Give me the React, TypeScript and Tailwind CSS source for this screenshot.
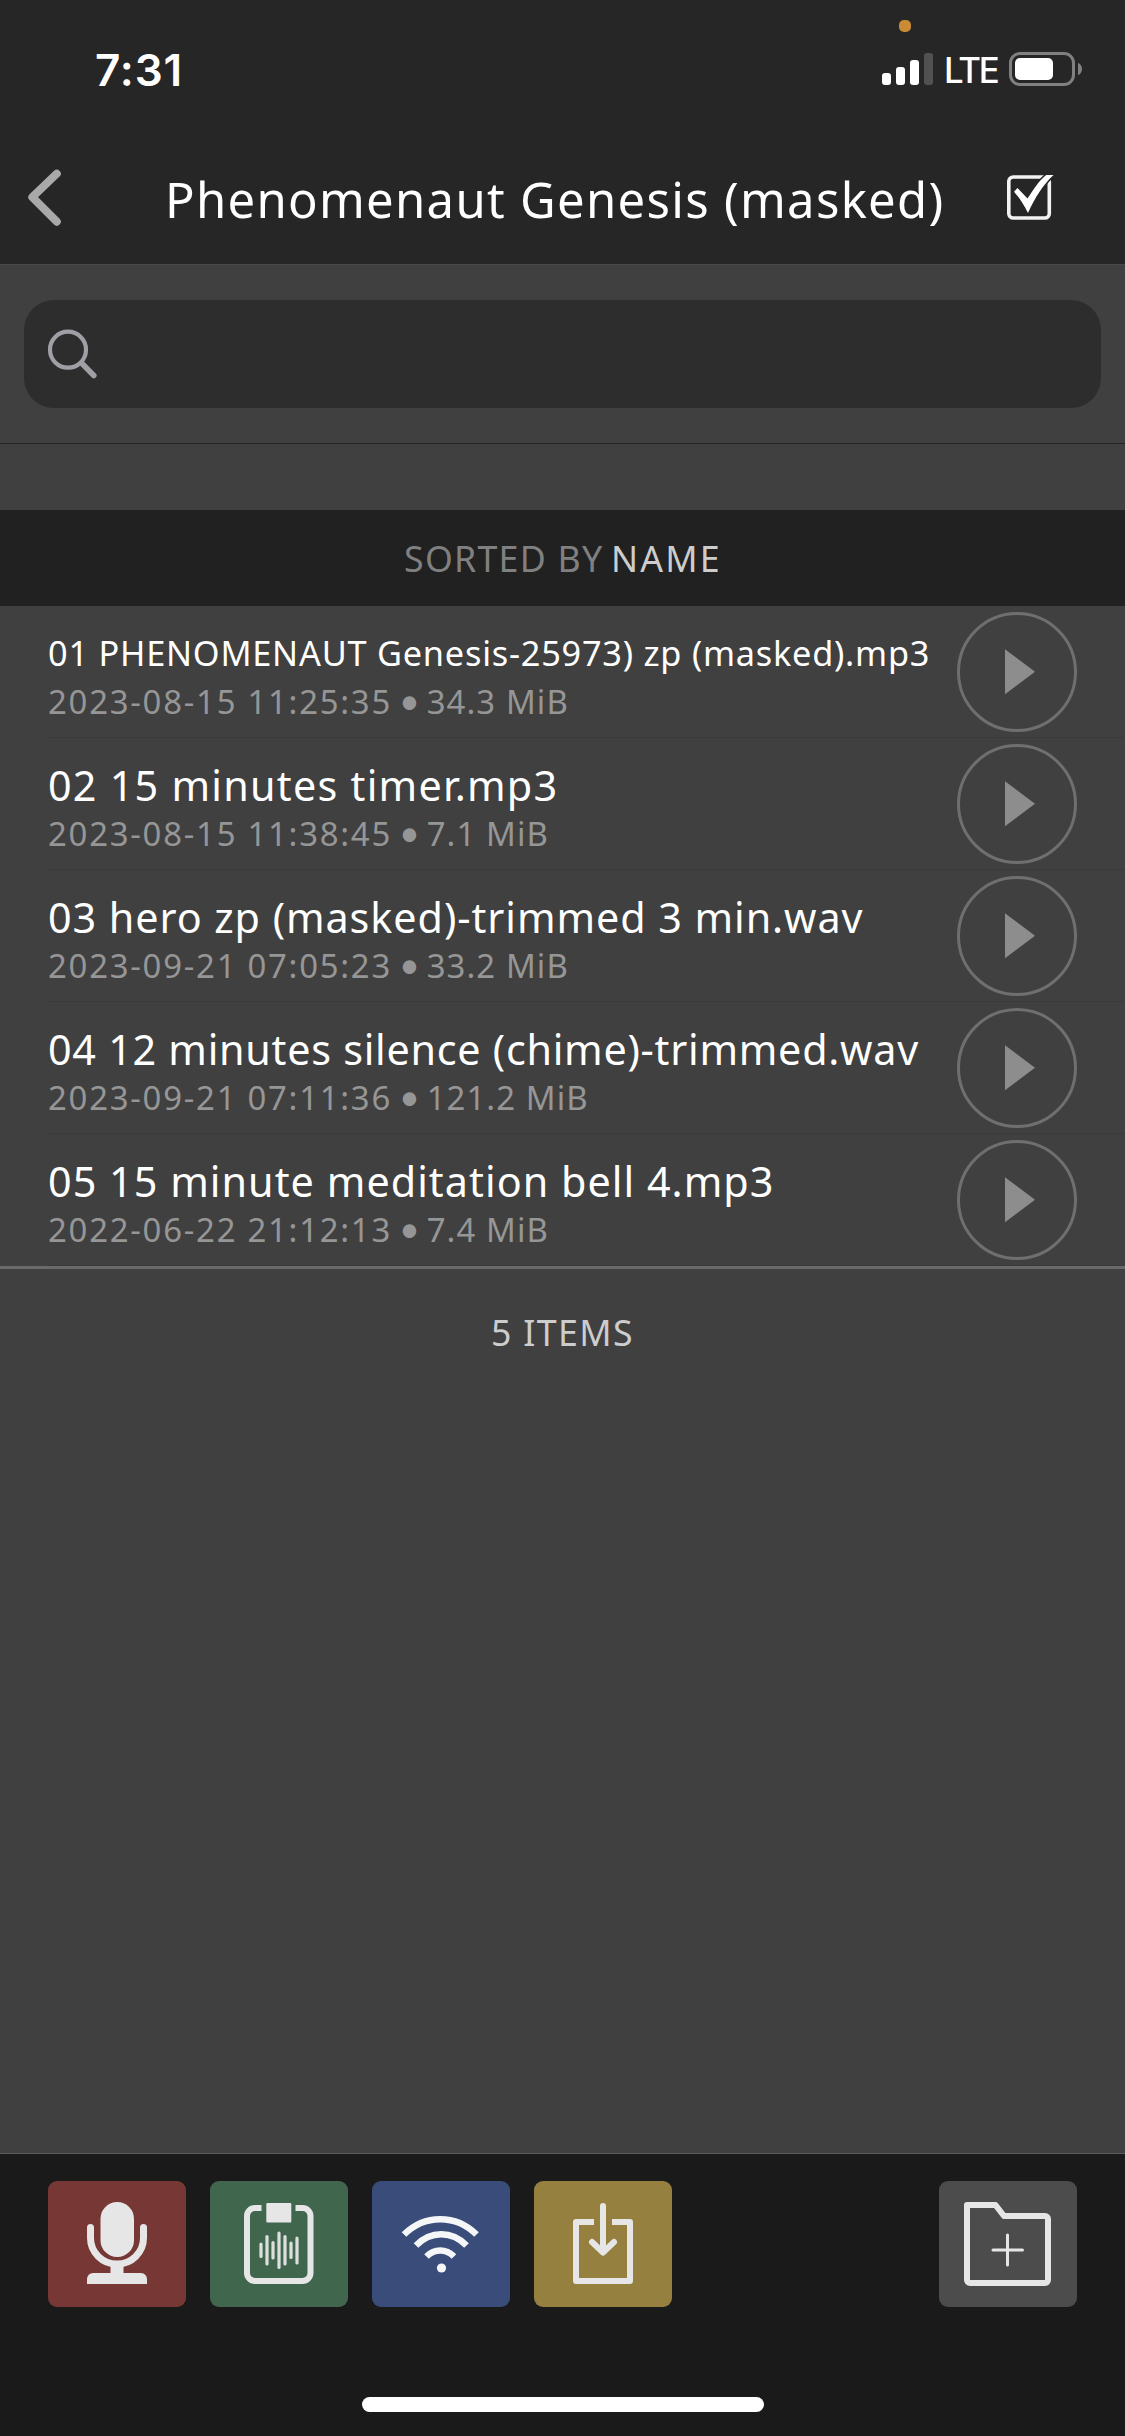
import type { ReactNode } from "react";
import { clsx } from "clsx";

type Track = {
  name: string;
  date: string;
  size: string;
  nameClass: string;
};

const tracks: Track[] = [
  {
    name: "01 PHENOMENAUT Genesis-25973) zp (masked).mp3",
    date: "2023-08-15 11:25:35",
    size: "34.3 MiB",
    nameClass: "text-[34.3px] tracking-[0.77px]",
  },
  {
    name: "02 15 minutes timer.mp3",
    date: "2023-08-15 11:38:45",
    size: "7.1 MiB",
    nameClass: "text-[41.3px] tracking-[1.25px]",
  },
  {
    name: "03 hero zp (masked)-trimmed 3 min.wav",
    date: "2023-09-21 07:05:23",
    size: "33.2 MiB",
    nameClass: "text-[41.3px] tracking-[0.94px]",
  },
  {
    name: "04 12 minutes silence (chime)-trimmed.wav",
    date: "2023-09-21 07:11:36",
    size: "121.2 MiB",
    nameClass: "text-[41.3px] tracking-[0.73px]",
  },
  {
    name: "05 15 minute meditation bell 4.mp3",
    date: "2022-06-22 21:12:13",
    size: "7.4 MiB",
    nameClass: "text-[41.3px] tracking-[1.04px]",
  },
];

function StatusBar() {
  return (
    <div className="relative flex h-[132px] items-center justify-between pt-[6px] pr-[43px] pl-[95px] font-['Inter',sans-serif] text-white">
      <span className="pt-[2px] text-[44px] leading-none font-semibold tracking-[0.9px]">7:31</span>
      <span className="absolute top-[20px] left-[899px] size-3 rounded-[5px] bg-[#c98b33]" />
      <div className="flex items-center">
        <div className="flex h-8 items-end gap-[5px]">
          <span className="h-3 w-[9px] rounded-[3px] bg-white" />
          <span className="h-[18px] w-[9px] rounded-[3px] bg-white" />
          <span className="h-[25px] w-[9px] rounded-[3px] bg-white" />
          <span className="h-8 w-[9px] rounded-[3px] bg-[#515151]" />
        </div>
        <span className="ml-[11px] w-[65px] pt-[3px] text-[34.8px] leading-none font-medium tracking-[-2.2px]">LTE</span>
        <div className="flex h-[34px] w-[66px] items-center rounded-[11px] border-3 border-[#808080] p-[3px]">
          <span className="h-[22px] w-[38px] rounded-[5px] bg-white" />
        </div>
        <svg className="ml-[3px] h-3 w-1" viewBox="0 0 4 12">
          <path d="M0 0c2.500.8 4 3 4 6s-1.500 5.200-4 6z" fill="#808080" />
        </svg>
      </div>
    </div>
  );
}

function NavBar() {
  return (
    <div className="flex h-[132px] items-center">
      <svg className="ml-6 h-[64px] w-[44px]" viewBox="0 0 44 64" fill="none">
        <path d="M32.800 7.700 8.300 31.200 32.800 55.700" stroke="#a9a9a9" strokeWidth="8" strokeLinecap="round" strokeLinejoin="round" />
      </svg>
      <h1 className="ml-[97px] w-[842px] pt-[2px] text-[49px] leading-none whitespace-nowrap text-white tracking-[1.3px]">
        Phenomenaut Genesis (masked)
      </h1>
      <svg className="size-12" viewBox="0 0 48 48">
        <rect x="1.800" y="3" width="40.500" height="41" rx="4.500" fill="none" stroke="#f2f2f2" strokeWidth="3.600" />
        <path
          d="M7 17.700 10.500 14 20.500 24.500C27 15 32 6.500 39.200 1H46.500C36 11 28 23.500 21 39 17 31 12.500 24 7 17.700z"
          fill="#fff"
          stroke="#262626"
          strokeWidth="3"
          paintOrder="stroke"
        />
      </svg>
    </div>
  );
}

function SearchField() {
  return (
    <div className="h-[180px] border-t border-b border-t-[#484848] border-b-[#242424] px-6 pt-[35px]">
      <div className="flex h-[108px] items-center rounded-[30px] bg-[#2d2d2d] pl-[22px]">
        <svg className="size-[54px]" viewBox="0 0 54 54" fill="none" stroke="#a09fa6" strokeLinecap="round">
          <circle cx="22" cy="22.700" r="18" strokeWidth="4.200" />
          <path d="M35.500 36 47.800 48.500" strokeWidth="5.500" />
        </svg>
      </div>
    </div>
  );
}

function TrackRow({ track }: { track: Track }) {
  return (
    <li className="ml-12 flex h-[132px] justify-between border-b border-[#3a3a3a] pr-12">
      <div className="pt-[23px] whitespace-nowrap">
        <p className={clsx("leading-[48px] text-white", track.nameClass)}>{track.name}</p>
        <p className="mt-[4px] h-[42px] text-[32.9px] leading-[42px] tracking-[1.75px] text-[#969696]">
          {track.date}{" "}
          <span className="inline-flex w-[14px] justify-center font-['Lato',sans-serif] text-[36px] leading-none tracking-normal">•</span>{" "}
          <span className="tracking-[1.1px]">{track.size}</span>
        </p>
      </div>
      <button className="mt-[6px] size-[120px] shrink-0 rounded-full border-3 border-[#6f6f6f]" aria-label="Play">
        <svg className="size-full" viewBox="0 0 114 114">
          <path d="M46 34.300v45L76 56.700z" transform="translate(-1 0)" fill="#8d8d8d" />
        </svg>
      </button>
    </li>
  );
}

function ToolButton({ label, className, children }: { label: string; className: string; children: ReactNode }) {
  return (
    <button className={clsx("h-[126px] w-[138px] rounded-[9px]", className)} aria-label={label}>
      <svg className="size-full" viewBox="0 0 138 126" fill="none">
        {children}
      </svg>
    </button>
  );
}

// Bars of the little wave form on the clipboard: x, top, bottom
const waveBars = [
  [51, 63, 75.5],
  [57, 55.5, 83],
  [63, 61.5, 77],
  [69, 52, 86.5],
  [75, 55.5, 83],
  [81, 62, 76.5],
  [87, 57, 82],
];

function Toolbar() {
  return (
    <footer className="flex h-[283px] flex-col border-t border-[#5b5b5b] bg-[#1a1a1a] px-12 pt-[27px]">
      <div className="flex gap-6">
        <ToolButton label="Record" className="bg-[#763735]">
          <rect x="52.500" y="21" width="33.500" height="55" rx="16.700" fill="#e6e6e6" />
          <path d="M42.500 46.500V57a26.500 26 0 0 0 53 0V46.500" stroke="#e6e6e6" strokeWidth="7" strokeLinecap="round" />
          <path d="M62.500 84h13v8H93a6 6 0 0 1 6 6v5H39v-5a6 6 0 0 1 6-6h17.500z" fill="#e6e6e6" />
        </ToolButton>
        <ToolButton label="Paste audio" className="bg-[#40664e]">
          <path d="M51.500 27H45a8 8 0 0 0-8 8v57a8 8 0 0 0 8 8h47.500a8 8 0 0 0 8-8V35a8 8 0 0 0-8-8h-7" stroke="#e6e6e6" strokeWidth="6" />
          <rect x="56.300" y="22" width="25" height="19.500" rx="1" fill="#e6e6e6" />
          {waveBars.map(([x, top, bottom]) => (
            <path key={x} d={`M${x} ${top}V${bottom}`} stroke="#dcdfdd" strokeWidth="3.200" strokeLinecap="round" />
          ))}
        </ToolButton>
        <ToolButton label="Wi-Fi transfer" className="bg-[#394c7a]">
          <g stroke="#f5f6f8" strokeWidth="6.500">
            <path d="M32 53.500C52.500 33 84 33 104.500 53.500" />
            <path d="M44 64.500C58.500 49.500 80 49.500 94.500 64.500" />
            <path d="M54.500 75.500C62.500 67.500 74 67.500 82 75.500" />
          </g>
          <circle cx="69.500" cy="87" r="4.600" fill="#f5f6f8" />
        </ToolButton>
        <ToolButton label="Import" className="bg-[#95803f]">
          <path d="M60 41H42v59h54V41H78" stroke="#e6e6e6" strokeWidth="6" strokeLinejoin="round" />
          <path d="M69 25v46M58 61 69 71.500 80 61" stroke="#e6e6e6" strokeWidth="6" strokeLinecap="round" strokeLinejoin="round" />
        </ToolButton>
        <ToolButton label="New folder" className="ml-auto bg-[#4c4c4c]">
          <path d="M28 24h28.500l8.500 11h41a3 3 0 0 1 3 3v61a3 3 0 0 1-3 3H31a3 3 0 0 1-3-3z" stroke="#e6e6e6" strokeWidth="6" strokeLinejoin="round" />
          <path d="M68.500 54v30M54 69h29.500" stroke="#e6e6e6" strokeWidth="3" strokeLinecap="round" />
        </ToolButton>
      </div>
      <div className="mx-auto mt-[90px] h-[15px] w-[402px] rounded-full bg-white" />
    </footer>
  );
}

export default function App() {
  return (
    <div className="flex h-[2436px] w-[1125px] flex-col overflow-hidden bg-[#404040] font-['Noto_Sans',sans-serif]">
      <header className="bg-[#262626]">
        <StatusBar />
        <NavBar />
      </header>
      <main className="flex-1">
        <SearchField />
        <div className="mt-[66px] h-24 bg-[#212121] pl-px text-center text-[35.7px] leading-[96px] tracking-[1.25px] text-[#808080]">
          SORTED BY <span className="-ml-[3px] tracking-[2.2px] text-[#cdcdcd]">NAME</span>
        </div>
        <ul className="border-b-3 border-[#6a6a6a]">
          {tracks.map((track) => (
            <TrackRow key={track.name} track={track} />
          ))}
        </ul>
        <p className="mt-[41px] text-center text-[35.7px] leading-[44px] tracking-[1.4px] text-[#cdcdcd]">5 ITEMS</p>
      </main>
      <Toolbar />
    </div>
  );
}
